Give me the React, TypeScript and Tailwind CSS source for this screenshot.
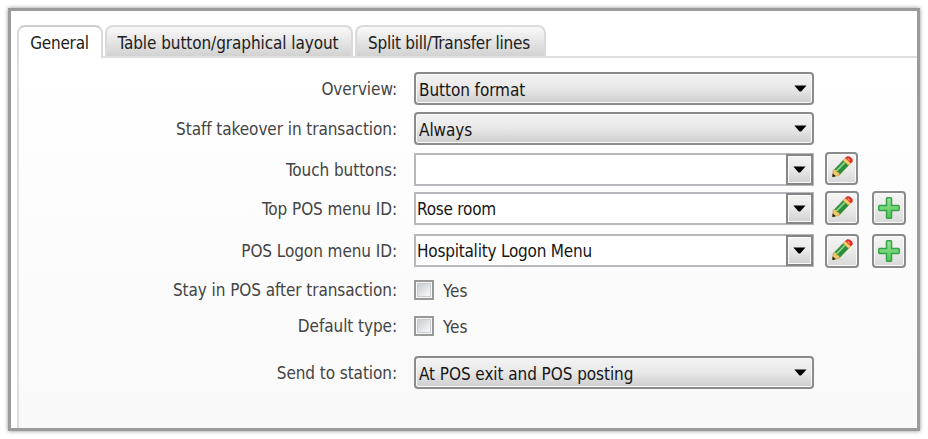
import type { ReactNode } from "react";

function Arrow() {
  return (
    <svg width="13" height="7" viewBox="0 0 13 7" className="shrink-0">
      <path d="M0.3 0.4H12.5L7.2 6.6H5.6Z" fill="#000" />
    </svg>
  );
}

function Pencil() {
  return (
    <svg width="22" height="22" viewBox="0 0 22 22" className="-mt-[2px]">
      <path d="M1.6 20.4 2.2 14.2 4.4 12.9 9.1 17.4 7.8 19.6Z" fill="#ecc873" stroke="#b98f35" strokeWidth="0.6" />
      <path d="M1.4 20.9 1.7 17.4 4.8 20.2Z" fill="#17130a" />
      <path d="M3.2 13.7 12.1 4.4 17.6 9.3 8.8 18.5 7.6 16.7 5.7 16.3 5.1 14.4Z" fill="#2b8f39" stroke="#47803a" strokeWidth="0.6" />
      <path d="M5.6 14.8 14.2 6" stroke="#8fd690" strokeWidth="1.7" />
      <path d="M2.9 14.2 4.8 14.6 5.4 16.6 7.3 17 8.1 18.8" fill="none" stroke="#efc65c" strokeWidth="1.2" />
      <path d="M12 4.4 14.3 2.1 19.9 7 17.6 9.4Z" fill="#f3cf6c" stroke="#c0933a" strokeWidth="0.6" />
      <path d="M14.4 2 16.2.6Q17.8 0 19.3 1.2L21 2.8Q22 4.2 21.3 5.5L19.9 7Z" fill="#e42c23" stroke="#d02a22" strokeWidth="0.5" />
      <path d="M16.6 2.6 18.8 4.6" stroke="#ff8b79" strokeWidth="1.3" />
    </svg>
  );
}

function Plus() {
  return (
    <svg width="24" height="24" viewBox="0 0 24 24">
      <defs>
        <linearGradient id="plusFill" x1="0" y1="0" x2="0" y2="1">
          <stop offset="0" stopColor="#a2dea0" />
          <stop offset="0.5" stopColor="#74d676" />
          <stop offset="1" stopColor="#50c455" />
        </linearGradient>
      </defs>
      <path
        d="M10.3 1.8H13.7Q14.5 1.8 14.5 2.6V9.6H21.4Q22.2 9.6 22.2 10.4V13.6Q22.2 14.4 21.4 14.4H14.5V21.4Q14.5 22.2 13.7 22.2H10.3Q9.5 22.2 9.5 21.4V14.4H2.6Q1.8 14.4 1.8 13.6V10.4Q1.8 9.6 2.6 9.6H9.5V2.6Q9.5 1.8 10.3 1.8Z"
        fill="url(#plusFill)"
        stroke="#35a447"
        strokeWidth="1.5"
      />
    </svg>
  );
}

function Row({ label, className, children }: { label: string; className: string; children: ReactNode }) {
  return (
    <div className={`flex items-center ${className}`}>
      <span className="mr-[17px] w-[378px] text-right tracking-[-0.07px] text-[#444]">{label}</span>
      {children}
    </div>
  );
}

function Select({ value }: { value: string }) {
  return (
    <div className="flex h-[33px] w-[400px] items-center justify-between rounded-[4px] border-2 border-[#8b8b8b] bg-linear-to-b from-[#f3f3f3] from-0% via-[#e9e9e9] via-48% to-[#cecece] pr-[5px] pl-[3px] text-[#161616] shadow-[inset_0_0_0_1px_#fafafa]">
      <span className="pt-[2px] tracking-[-0.07px]">{value}</span>
      <Arrow />
    </div>
  );
}

function Combo({ value }: { value: string }) {
  return (
    <div className="flex h-[33px] w-[400px] items-center justify-between border-2 border-[#b7b7bd] bg-white pl-px text-[#161616]">
      <span className="tracking-[-0.22px]">{value}</span>
      <div className="-mr-px flex h-[31px] w-[27px] items-center justify-center border-2 border-[#858585] bg-linear-to-b from-[#f3f3f3] via-[#e9e9e9] to-[#d0d0d0] shadow-[inset_0_0_0_1px_#fafafa]">
        <Arrow />
      </div>
    </div>
  );
}

function IconButton({ className, children }: { className: string; children: ReactNode }) {
  return (
    <div className={`flex shrink-0 items-center justify-center rounded-[4px] border-2 border-[#8b8b8b] bg-linear-to-b from-[#f4f4f4] via-[#ebebeb] to-[#d8d8d8] shadow-[inset_0_0_0_1px_#fafafa] ${className}`}>
      {children}
    </div>
  );
}

function CheckYes() {
  return (
    <>
      <div className="h-5 w-5 border-2 border-[#989898] bg-[#f8f8f8] p-px">
        <div className="h-[14px] w-[14px] border border-[#c9cccf] bg-linear-to-br from-[#c6ccd4] to-[#fafafa]" />
      </div>
      <span className="ml-[9px] pt-[2px] text-[#444]">Yes</span>
    </>
  );
}

function Tab({ className, children }: { className: string; children: ReactNode }) {
  return (
    <div className={`flex items-center justify-center rounded-t-[8px] border-2 border-b-0 border-[#dadada] ${className}`}>
      {children}
    </div>
  );
}

export default function App() {
  return (
    <div className="h-[439px] w-[928px] overflow-hidden bg-white pt-[11px] pl-[11px] font-['DejaVu_Sans_Condensed','DejaVu_Sans',sans-serif] text-[17px] leading-5 whitespace-nowrap [font-stretch:condensed]">
      <div className="flex h-[417px] w-[906px] flex-col bg-white pl-[6px] shadow-[0_0_0_3px_#9b9b9b,0_0_4px_3px_#8f8f8f]">
        <div className="mt-[14px] flex h-[33px] shrink-0 items-stretch text-[#202020]">
          <Tab className="w-[86px] border-t-[#cfcfcf] bg-white pr-px tracking-[-0.25px]">General</Tab>
          <div className="flex grow gap-[2px] border-b-2 border-[#dedede] pl-[2px]">
            <Tab className="w-[248px] bg-linear-to-b from-[#f9f9f9] to-[#d2d2d2] pt-[2px] pr-[2px] tracking-[-0.08px]">Table button/graphical layout</Tab>
            <Tab className="w-[191px] bg-linear-to-b from-[#f9f9f9] to-[#d2d2d2] pt-[2px] pr-[3px] tracking-[-0.25px]">Split bill/Transfer lines</Tab>
          </div>
        </div>
        <div className="flex grow flex-col border-l-2 border-[#dedede] bg-linear-to-b from-white to-[#f9f9f9]">
          <Row label="Overview:" className="mt-[14px] h-[33px]"><Select value="Button format" /></Row>
          <Row label="Staff takeover in transaction:" className="mt-[7px] h-[33px]"><Select value="Always" /></Row>
          <Row label="Touch buttons:" className="mt-[8px] h-[33px]">
            <Combo value="" />
            <IconButton className="-mt-[3px] ml-[11px] h-[33px] w-[33px]"><Pencil /></IconButton>
          </Row>
          <Row label="Top POS menu ID:" className="mt-[6px] h-[33px]">
            <Combo value="Rose room" />
            <IconButton className="-mt-px ml-[11px] h-[34px] w-[34px]"><Pencil /></IconButton>
            <IconButton className="-mt-px ml-[13px] h-[34px] w-[34px]"><Plus /></IconButton>
          </Row>
          <Row label="POS Logon menu ID:" className="mt-[9px] h-[33px]">
            <Combo value="Hospitality Logon Menu" />
            <IconButton className="mt-px ml-[11px] h-[34px] w-[34px]"><Pencil /></IconButton>
            <IconButton className="mt-px ml-[13px] h-[34px] w-[34px]"><Plus /></IconButton>
          </Row>
          <Row label="Stay in POS after transaction:" className="mt-[13px] h-5"><CheckYes /></Row>
          <Row label="Default type:" className="mt-4 h-5"><CheckYes /></Row>
          <Row label="Send to station:" className="mt-5 h-[33px]"><Select value="At POS exit and POS posting" /></Row>
        </div>
      </div>
    </div>
  );
}
